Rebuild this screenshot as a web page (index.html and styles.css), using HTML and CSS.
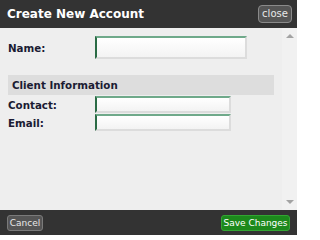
FILE: index.html
```html
<!DOCTYPE html>
<html>
<head>
<meta charset="utf-8">
<link rel="stylesheet" href="styles.css">
</head>
<body>
<div class="dialog">
  <div class="header">
    <div class="title">Create New Account</div>
    <button class="close">close</button>
  </div>
  <div class="content">
    <div class="main">
      <div class="row row-main">
        <label class="label">Name:</label>
        <input class="field field-lg" type="text">
      </div>
      <div class="section">Client Information</div>
      <div class="row">
        <label class="label">Contact:</label>
        <input class="field field-sm" type="text">
      </div>
      <div class="row">
        <label class="label">Email:</label>
        <input class="field field-sm" type="text">
      </div>
    </div>
    <div class="scrollbar">
      <span class="arrow arrow-up"></span>
      <span class="arrow arrow-down"></span>
    </div>
  </div>
  <div class="footer">
    <button class="btn btn-cancel">Cancel</button>
    <button class="btn btn-save">Save Changes</button>
  </div>
</div>
</body>
</html>
```

FILE: styles.css
```css
html, body {
  margin: 0;
  padding: 0;
}
body {
  width: 297px;
  height: 235px;
  overflow: hidden;
  font-family: "DejaVu Sans", Verdana, sans-serif;
}
.dialog {
  display: flex;
  flex-direction: column;
  width: 297px;
  height: 235px;
  background: #333;
}
.header {
  height: 28px;
  flex: none;
  display: flex;
  align-items: center;
  justify-content: space-between;
  padding: 0 5px 0 7px;
  background: #333;
}
.title {
  color: #fff;
  font-weight: bold;
  font-size: 12px;
}
.close {
  height: 18px;
  width: 34px;
  padding: 0 0 1px;
  border: 1px solid #8a8a8a;
  border-radius: 4px;
  background: #555;
  color: #e8e8e8;
  font-family: "DejaVu Sans", Verdana, sans-serif;
  font-size: 10px;
}
.content {
  flex: 1;
  display: flex;
  background: #eee;
}
.main {
  flex: 1;
  padding: 8px 0 0 8px;
}
.scrollbar {
  width: 15px;
  flex: none;
  background: #f1f1f1;
  display: flex;
  flex-direction: column;
  justify-content: space-between;
  align-items: center;
  padding: 6px 0 6px;
  box-sizing: border-box;
}
.arrow {
  width: 0;
  height: 0;
  border-left: 4px solid transparent;
  border-right: 4px solid transparent;
}
.arrow-up {
  border-bottom: 4px solid #a3a3a3;
}
.arrow-down {
  border-top: 4px solid #a3a3a3;
}
.row {
  display: flex;
  align-items: center;
  margin-bottom: 1px;
  width: 266px;
}
.row-main {
  margin-bottom: 16px;
}
.label {
  width: 87px;
  font-weight: bold;
  font-size: 10.3px;
  color: #1b1b33;
}
.field {
  box-sizing: border-box;
  margin: 0;
  padding: 0 3px;
  border-style: solid;
  border-width: 2px;
  border-color: #6fa98a #dcdcdc #dcdcdc #2a6b45;
  background: linear-gradient(#ffffff, #f3f3f3);
  outline: none;
}
.field-lg {
  width: 152px;
  height: 23px;
}
.field-sm {
  width: 136px;
  height: 17px;
}
.section {
  width: 266px;
  height: 20px;
  box-sizing: border-box;
  background: #ddd;
  padding-left: 4px;
  display: flex;
  align-items: center;
  font-weight: bold;
  font-size: 10.3px;
  color: #1b1b33;
  margin-bottom: 1px;
}
.footer {
  height: 25px;
  flex: none;
  display: flex;
  align-items: center;
  justify-content: space-between;
  padding: 0 7px 0 7px;
  background: #333;
}
.btn {
  height: 16px;
  padding: 0;
  border-radius: 3px;
  font-family: "DejaVu Sans", Verdana, sans-serif;
  font-size: 9px;
  white-space: nowrap;
  color: #fff;
}
.btn-cancel {
  width: 36px;
  border: 1px solid #7a7a7a;
  background: #555;
  color: #e8e8e8;
}
.btn-save {
  width: 69px;
  border: 1px solid #33a533;
  background: #1c891c;
}
```
